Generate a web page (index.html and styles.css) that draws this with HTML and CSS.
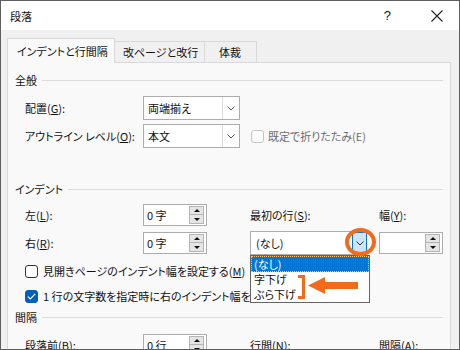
FILE: index.html
```html
<!DOCTYPE html>
<html lang="ja">
<head>
    <meta charset="UTF-8">
    <title>段落</title>
    <link rel="stylesheet" href="styles.css">
</head>
<body>

<div class="window">
    <div class="titlebar">
        <span class="title">段落</span>
        <span class="help">?</span>
        <svg class="close" width="12" height="12" viewBox="0 0 12 12"><path d="M0.5 0.5 L11.5 11.5 M11.5 0.5 L0.5 11.5" stroke="#222" stroke-width="1.1" fill="none"/></svg>
    </div>

    <div class="body">
        <div class="tabs">
            <div class="tab active">インデントと行間隔</div>
            <div class="tab">改ページと改行</div>
            <div class="tab">体裁</div>
        </div>

        <div class="panel">
            <div class="group first">全般</div>

            <div class="row r-align">
                <span class="lbl">配置(<u>G</u>):</span>
                <div class="select w97">
                    <span class="val">両端揃え</span>
                    <span class="drop"><svg width="8" height="5" viewBox="0 0 8 5"><path d="M0.5 0.5 L4 4 L7.5 0.5" stroke="#555" fill="none"/></svg></span>
                </div>
            </div>

            <div class="row r-outline">
                <span class="lbl">アウトライン レベル(<u>O</u>):</span>
                <div class="select w97">
                    <span class="val">本文</span>
                    <span class="drop"><svg width="8" height="5" viewBox="0 0 8 5"><path d="M0.5 0.5 L4 4 L7.5 0.5" stroke="#555" fill="none"/></svg></span>
                </div>
                <span class="check disabled"></span>
                <span class="dim">既定で折りたたみ(E)</span>
            </div>

            <div class="group indent">インデント</div>

            <div class="row r-left">
                <span class="lbl">左(<u>L</u>):</span>
                <div class="spin">
                    <span class="val">0 字</span>
                    <span class="btns"><span class="up"></span><span class="down"></span></span>
                </div>
                <span class="lbl3">最初の行(<u>S</u>):</span>
                <span>幅(<u>Y</u>):</span>
            </div>

            <div class="row r-right">
                <span class="lbl">右(<u>R</u>):</span>
                <div class="spin">
                    <span class="val">0 字</span>
                    <span class="btns"><span class="up"></span><span class="down"></span></span>
                </div>
                <div class="select first-line">
                    <span class="val">(なし)</span>
                    <span class="drop hot"><svg width="8" height="5" viewBox="0 0 8 5"><path d="M0.5 0.5 L4 4 L7.5 0.5" stroke="#333" fill="none"/></svg></span>
                    <ul class="list">
                        <li class="sel">(なし)</li>
                        <li>字下げ</li>
                        <li>ぶら下げ</li>
                    </ul>
                </div>
                <div class="spin">
                    <span class="val"></span>
                    <span class="btns"><span class="up"></span><span class="down"></span></span>
                </div>
            </div>

            <div class="row r-check1">
                <span class="check"></span>
                <span>見開きページのインデント幅を設定する(<u>M</u>)</span>
            </div>
            <div class="row r-check2">
                <span class="check on"><svg width="9" height="7" viewBox="0 0 9 7"><path d="M0.8 3.6 L3.3 6 L8.2 0.8" stroke="#fff" stroke-width="1.2" fill="none"/></svg></span>
                <span>1 行の文字数を指定時に右のインデント幅を自動調整する(<u>D</u>)</span>
            </div>

            <div class="group spacing">間隔</div>

            <div class="row r-before">
                <span class="lbl">段落前(<u>B</u>):</span>
                <div class="spin">
                    <span class="val">0 行</span>
                    <span class="btns"><span class="up"></span><span class="down"></span></span>
                </div>
                <span class="lbl3">行間(<u>N</u>):</span>
                <span>間隔(<u>A</u>):</span>
            </div>
        </div>
    </div>

    <!-- 注釈 -->
    <svg class="marks" width="460" height="350" viewBox="0 0 460 350">
        <ellipse cx="360.5" cy="242" rx="13.5" ry="12" stroke="#f26b1d" stroke-width="4" fill="none"/>
        <path d="M298 276.5 H303.5 V297.5 H298" stroke="#f26b1d" stroke-width="3" fill="none"/>
        <path d="M308 285.5 L325 277 L325 282 L358 282 L358 289 L325 289 L325 294 Z" fill="#f26b1d"/>
    </svg>
</div>

</body>
</html>
```

FILE: styles.css
```css
* {
    box-sizing: border-box;
}

body {
    margin: 0;
    font-family: "Noto Sans CJK JP", sans-serif;
    font-size: 11px;
    font-feature-settings: "palt";
    color: #111;
    white-space: nowrap;
}

.window {
    position: relative;
    width: 460px;
    height: 350px;
    border: 1px solid #5f5f5f;
    overflow: hidden;
    background: #f0f0f0;
}

.titlebar {
    height: 29px;
    background: #fff;
    display: flex;
    align-items: center;
    padding-left: 9px;
}

.title {
    flex: 1;
}

.help {
    font-family: "Liberation Sans", sans-serif;
    font-size: 13px;
    margin-right: 40px;
}

.close {
    margin-right: 16px;
}

.body {
    padding: 8px 7px 0 6px;
}

/* タブ */
.tabs {
    display: flex;
    align-items: flex-end;
    height: 24px;
}

.tab {
    flex-shrink: 0;
    height: 21px;
    padding: 0 8px;
    border: 1px solid #d9d9d9;
    border-bottom: none;
    border-left: none;
    display: flex;
    align-items: center;
    background: #f0f0f0;
}

.tab.active {
    height: 25px;
    width: 108px;
    padding-left: 9px;
    border-left: 1px solid #d9d9d9;
    background: #f9f9f9;
    position: relative;
    top: 1px;
    z-index: 1;
}

.tab:nth-child(2) { width: 90px; }
.tab:nth-child(3) { width: 52px; padding-left: 14px; }

.panel {
    width: 444px;
    height: 300px;
    border: 1px solid #d9d9d9;
    background: #f9f9f9;
    padding: 0 7px;
}

/* グループ見出し */
.group {
    display: flex;
    align-items: center;
    height: 16px;
    gap: 5px;
}

.group::after {
    content: "";
    flex: 1;
    height: 1px;
    background: #dcdcdc;
}

.group.first { margin-top: 9px; }
.group.indent { margin-top: 33px; }
.group.spacing { margin-top: 4px; }

.row {
    display: flex;
    align-items: center;
    height: 24px;
    padding-left: 10px;
}

.row > * {
    flex-shrink: 0;
}

.lbl {
    width: 118px;
}

.lbl3 {
    width: 129px;
    margin-left: 43px;
}

.r-align { margin-top: 8px; }
.r-outline { margin-top: 4px; }
.r-left { margin-top: 7px; height: 22px; }
.r-right { margin-top: 5px; }
.r-check1 { margin-top: 7px; height: 18px; }
.r-check2 { margin-top: 7px; height: 18px; }
.r-before { margin-top: 8px; }

/* コンボボックス */
.select {
    position: relative;
    height: 24px;
    border: 1px solid #adadad;
    background: #fff;
    display: flex;
    align-items: center;
}

.select.w97 { width: 97px; }

.select .val {
    flex: 1;
    padding-left: 4px;
}

.drop {
    width: 17px;
    height: 100%;
    border-left: 1px solid #dadada;
    display: flex;
    align-items: center;
    justify-content: center;
}

.drop.hot {
    width: 15px;
    height: 22px;
    margin-right: -1px;
    border: 1px solid #0078d7;
    background: #cce4f7;
}

.first-line {
    width: 117px;
    margin-left: 43px;
    margin-right: 12px;
}

.first-line .val { padding-left: 5px; }

.list {
    position: absolute;
    left: -1px;
    top: 23px;
    width: 120px;
    margin: 0;
    padding: 0;
    list-style: none;
    background: #fff;
    border: 1px solid #646464;
    z-index: 2;
}

.list li {
    height: 15px;
    line-height: 15px;
    padding-left: 3px;
}

.list li.sel {
    height: 16px;
    line-height: 16px;
    background: #0078d7;
    color: #fff;
    outline: 1px dotted #f5c77e;
    outline-offset: -1px;
}

/* スピンボックス */
.spin {
    width: 64px;
    height: 22px;
    border: 1px solid #adadad;
    background: #fff;
    display: flex;
    align-items: center;
    padding: 1px;
}

.spin .val {
    flex: 1;
    padding-left: 2px;
}

.btns {
    display: flex;
    flex-direction: column;
    width: 15px;
    margin-right: 1px;
}

.btns span {
    height: 9px;
    background: #e5e5e5;
    border: 1px solid #b4b4b4;
    display: flex;
    align-items: center;
    justify-content: center;
}

.btns .down { border-top: none; }

.btns .up::before {
    content: "";
    border-left: 3px solid transparent;
    border-right: 3px solid transparent;
    border-bottom: 3px solid #111;
}

.btns .down::before {
    content: "";
    border-left: 3px solid transparent;
    border-right: 3px solid transparent;
    border-top: 3px solid #111;
}

/* チェックボックス */
.check {
    width: 13px;
    height: 13px;
    border: 1px solid #333;
    border-radius: 3px;
    background: #fff;
    margin-right: 5px;
    display: flex;
    align-items: center;
    justify-content: center;
}

.check.on {
    background: #005fb8;
    border-color: #005fb8;
}

.check.disabled {
    border-color: #c5c5c5;
    margin-left: 11px;
    margin-right: 4px;
}

.dim {
    color: #6d6d6d;
}

.marks {
    position: absolute;
    left: -1px;
    top: -1px;
    pointer-events: none;
    z-index: 3;
}
```
